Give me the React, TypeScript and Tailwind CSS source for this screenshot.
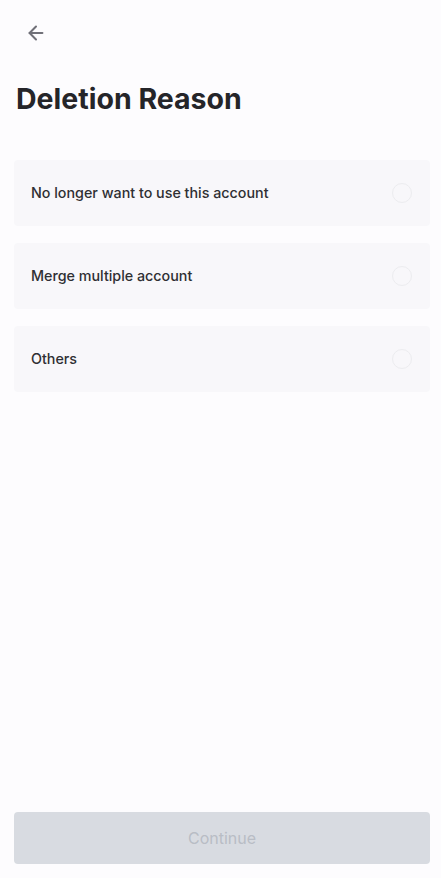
import { ArrowLeft } from "lucide-react";

const REASONS = ["No longer want to use this account", "Merge multiple account", "Others"];

function ReasonRow({ label }: { label: string }) {
  return (
    <div className="flex h-[66px] items-center justify-between rounded-[4px] bg-[#f8f7fa] pl-[17px] pr-[18px]">
      <span className="text-[14.3px] font-medium text-[#2f2f33]">{label}</span>
      <span className="h-[20px] w-[20px] rounded-full border-[1.5px] border-[#ececef]" />
    </div>
  );
}

export default function App() {
  return (
    <div
      className="flex h-[878px] w-[441px] flex-col bg-[#fdfcfe]"
      style={{ fontFamily: "Inter, 'Noto Sans', sans-serif" }}
    >
      <div className="flex h-[66px] items-center pl-[25px]">
        <ArrowLeft size={22} strokeWidth={2.2} className="text-[#707078]" />
      </div>
      <h1 className="mt-[16px] pl-[16px] text-[28.5px] font-bold leading-[34px] text-[#252529]">
        Deletion Reason
      </h1>
      <div className="mt-[44px] flex flex-col gap-[17px] pl-[14px] pr-[11px]">
        {REASONS.map((r) => (
          <ReasonRow key={r} label={r} />
        ))}
      </div>
      <div className="mt-auto px-[14px] pb-[14px] pr-[11px]">
        <button className="h-[52px] w-full rounded-[4px] bg-[#d8dbe1] text-[16px] text-[#b9bdc5]">
          Continue
        </button>
      </div>
    </div>
  );
}
